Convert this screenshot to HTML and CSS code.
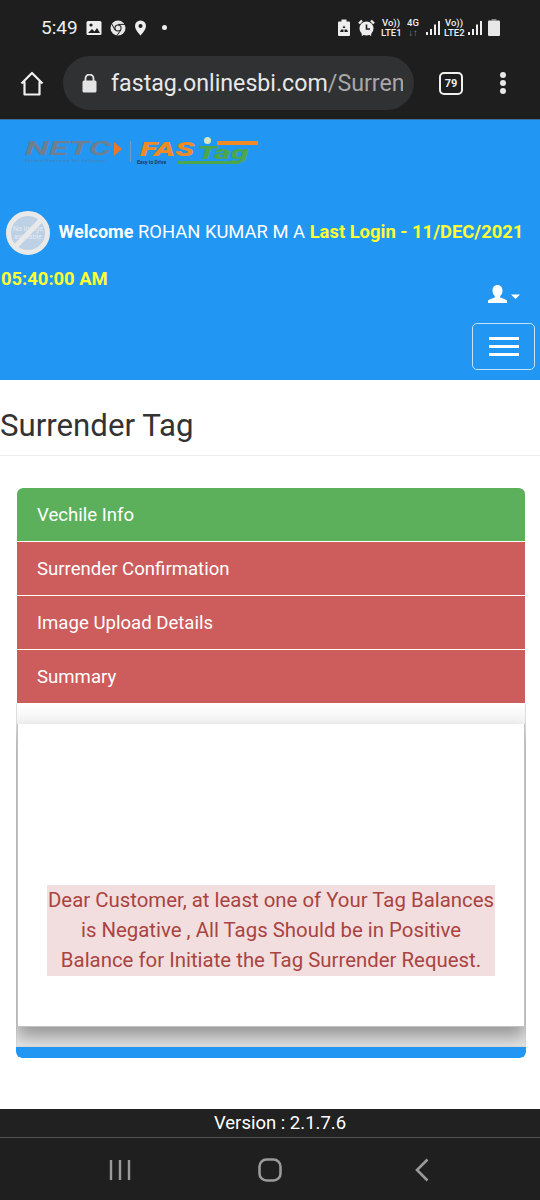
FILE: index.html
```html
<!DOCTYPE html>
<html lang="en">

<head>
    <meta charset="UTF-8">
    <meta name="viewport" content="width=device-width, initial-scale=1.0">
    <title>Surrender Tag</title>
    <link rel="stylesheet" href="styles.css">
</head>

<body>
    <!-- Phone status bar -->
    <div class="status-bar">
        <div class="status-left">
            <span class="clock">5:49</span>
            <svg width="16" height="16" viewBox="0 0 16 16"><rect x="0.5" y="1" width="15" height="14" rx="1.5" fill="#eee"/><circle cx="5" cy="5" r="1.6" fill="#1e1e1e"/><path d="M2 13l4-4 2.5 2.5L11 8l3 5z" fill="#1e1e1e"/></svg>
            <svg width="16" height="16" viewBox="0 0 16 16"><circle cx="8" cy="8" r="7.5" fill="#e6e6e6"/><circle cx="8" cy="8" r="3.6" fill="#1e1e1e"/><circle cx="8" cy="8" r="2.5" fill="#e6e6e6"/><path d="M8 4.4h7M5 10L1.8 4M10.8 10.2L7 15.4" stroke="#1e1e1e" stroke-width="1"/></svg>
            <svg width="13" height="16" viewBox="0 0 12 16"><path d="M6 0.5a5.5 5.5 0 0 0-5.500 5.500C0.500 10 6 15.500 6 15.500S11.500 10 11.500 6A5.500 5.500 0 0 0 6 0.500z" fill="#eee"/><circle cx="6" cy="6" r="2" fill="#1e1e1e"/></svg>
            <span class="status-dot"></span>
        </div>
        <div class="status-right">
            <svg class="saver" width="12" height="17" viewBox="0 0 12 17"><path d="M3.500 0.500h5v2H11a1 1 0 0 1 1 1V16a1 1 0 0 1-1 1H1a1 1 0 0 1-1-1V3.500a1 1 0 0 1 1-1h2.500z" fill="#eee"/><path d="M6 6.500l1.500 2.500h-3zM3 10.500h2.500v2.500H2zM6.500 10.500H9l1 2.500H6.500z" fill="#1e1e1e"/></svg>
            <svg class="alarm" width="17" height="17" viewBox="0 0 17 17"><circle cx="8.500" cy="9.500" r="7" fill="#eee"/><path d="M8.500 5.500v4.500h3.500" fill="none" stroke="#1e1e1e" stroke-width="1.600"/><path d="M1 4.500L4 1.500M16 4.500L13 1.500" stroke="#eee" stroke-width="2.400"/><path d="M4 16.500l1.500-2M13 16.500l-1.500-2" stroke="#eee" stroke-width="1.500"/></svg>
            <span class="net-label net-lte1">Vo))<br>LTE1</span>
            <span class="net-label net-4g">4G<br><span class="net-arrows">↓↑</span></span>
            <svg class="signal-1" width="14" height="15" viewBox="0 0 14 15"><path d="M0 12h2v3H0zM4 9h2v6H4zM8 4.500h2V15H8zM12 1h2v14h-2z" fill="#eee"/></svg>
            <span class="net-label net-lte2">Vo))<br>LTE2</span>
            <svg width="14" height="15" viewBox="0 0 14 15"><path d="M0 12h2v3H0zM4 9h2v6H4zM8 4.500h2V15H8zM12 1h2v14h-2z" fill="#eee"/></svg>
            <svg class="battery" width="12" height="17" viewBox="0 0 12 17"><path d="M3.500 0h5v1.500h-5z" fill="#888"/><rect x="0" y="1.500" width="12" height="15.500" rx="1" fill="#e8e8e8"/></svg>
        </div>
    </div>

    <!-- Browser toolbar -->
    <div class="browser-bar">
        <svg class="home-icon" width="24" height="25" viewBox="0 0 24 25"><path d="M1.500 12.500L12 2l10.500 10.500M4.500 10.500V23.500h15V10.500" fill="none" stroke="#f0f0f0" stroke-width="2.200" stroke-linejoin="round"/></svg>
        <div class="url-box">
            <svg width="15" height="19" viewBox="0 0 15 19"><rect x="0.500" y="6.500" width="14" height="12" rx="1.500" fill="#e4e4e4"/><path d="M3.500 7V4.500a4 4 0 0 1 8 0V7" fill="none" stroke="#e4e4e4" stroke-width="1.800"/></svg>
            <span class="url-text">fastag.onlinesbi.com<span class="url-path">/Surrend</span></span>
        </div>
        <div class="tab-count">79</div>
        <div class="menu-dots"><span></span><span></span><span></span></div>
    </div>

    <!-- Site header -->
    <header class="site-header">
        <div class="logos">
            <div class="logo-netc">
                <div class="netc-word"><span>NETC</span><i class="netc-arrow"></i></div>
                <div class="netc-sub">National Electronic Toll Collection</div>
            </div>
            <span class="logo-line"></span>
            <div class="logo-fastag">
                <span class="fas-word">FAS</span>
                <span class="tag-word">Tag</span>
                <i class="fastag-stripe"></i>
                <i class="fastag-flag"></i>
                <i class="fastag-road"></i>
                <span class="fastag-sub">Easy to Drive</span>
            </div>
        </div>
        <div class="welcome">
            <svg class="avatar" width="44" height="44" viewBox="0 0 44 44"><circle cx="22" cy="22" r="19.500" fill="#bdd0e4" stroke="#e9e9e9" stroke-width="5"/><text x="22" y="20" class="avatar-text">No image</text><text x="22" y="28" class="avatar-text">available</text><path d="M9 36L36 8" stroke="#e9e9e9" stroke-width="5"/></svg>
            <b class="welcome-label">Welcome</b> <span class="welcome-name">ROHAN KUMAR M A</span> <b class="last-login">Last Login - 11/DEC/2021</b> <b class="last-login">05:40:00 AM</b>
        </div>
        <div class="user-row">
            <svg width="32" height="18" viewBox="0 0 32 18"><path d="M9.500 0c3.300 0 5 2.400 5 5.700 0 2.300-1 4.300-2.300 5.300v1.400c2.700 1 5.900 1.900 6.800 3.200V18H0v-2.400c.9-1.300 4.100-2.200 6.800-3.200V11C5.500 10 4.500 8 4.500 5.700 4.500 2.400 6.200 0 9.500 0z" fill="#fff"/><path d="M23 9.500h9l-4.500 4.500z" fill="#fff"/></svg>
        </div>
        <div class="toggle-row">
            <div class="navbar-toggle"><span></span><span></span><span></span></div>
        </div>
    </header>

    <h1 class="page-title">Surrender Tag</h1>

    <div class="main-panel">
        <div class="step step-done">Vechile Info</div>
        <div class="step step-todo">Surrender Confirmation</div>
        <div class="step step-todo">Image Upload Details</div>
        <div class="step step-todo">Summary</div>

        <div class="step-body">
            <div class="message-card">
                <p class="message">Dear Customer, at least one of Your Tag Balances is Negative , All Tags Should be in Positive Balance for Initiate the Tag Surrender Request.</p>
            </div>
        </div>
        <div class="panel-foot"></div>
    </div>

    <div class="version-bar">Version : 2.1.7.6</div>

    <!-- Phone nav buttons -->
    <div class="nav-bar">
        <svg width="22" height="22" viewBox="0 0 22 22"><path d="M2 1v20M11 1v20M20 1v20" stroke="#9a9a9a" stroke-width="2.400"/></svg>
        <svg class="nav-home" width="24" height="24" viewBox="0 0 24 24"><rect x="1.500" y="1.500" width="21" height="21" rx="7" fill="none" stroke="#9a9a9a" stroke-width="2.600"/></svg>
        <svg width="14" height="24" viewBox="0 0 14 24"><path d="M12.500 1.500L2 12l10.500 10.500" fill="none" stroke="#9a9a9a" stroke-width="2.600"/></svg>
    </div>
</body>

</html>
```
FILE: styles.css
```css
/* Global Styles */
html,
body {
    margin: 0;
    padding: 0;
}

body {
    width: 540px;
    height: 1200px;
    overflow: hidden;
    background-color: #fff;
    font-family: Roboto, "Liberation Sans", sans-serif;
}

/* Status bar */
.status-bar {
    height: 55px;
    box-sizing: border-box;
    padding: 0 40px 0 41px;
    display: flex;
    justify-content: space-between;
    align-items: center;
    background-color: #1e1e1e;
    color: #eee;
}

.status-left {
    display: flex;
    align-items: center;
    gap: 8px;
}

.clock {
    font-size: 19px;
}

.status-dot {
    width: 5px;
    height: 5px;
    margin-left: 7px;
    border-radius: 50%;
    background-color: #eee;
}

.status-right {
    display: flex;
    align-items: center;
    gap: 4px;
}

.alarm {
    margin-left: 4px;
    margin-right: 2px;
}

.net-label {
    width: 20px;
    font-size: 9.5px;
    line-height: 10px;
    text-align: center;
    font-weight: 500;
}

.net-lte1 {
    margin-right: 2px;
}

.net-4g {
    width: 12px;
    margin-right: 3px;
}

.net-arrows {
    color: #888;
}

.battery {
    margin-left: 2px;
}

/* Browser toolbar */
.browser-bar {
    height: 64px;
    box-sizing: border-box;
    padding: 0 0 8px 20px;
    display: flex;
    align-items: center;
    background-color: #1e1e1e;
}

.url-box {
    width: 351px;
    height: 54px;
    box-sizing: border-box;
    margin-left: 19px;
    padding-left: 19px;
    display: flex;
    align-items: center;
    gap: 14px;
    border-radius: 27px;
    background-color: #303133;
    overflow: hidden;
}

.url-text {
    width: 292px;
    flex: none;
    overflow: hidden;
    white-space: nowrap;
    font-size: 23.2px;
    color: #e8e8e8;
}

.url-path {
    color: #a8a8a8;
}

.tab-count {
    width: 20px;
    height: 19px;
    margin-left: 25px;
    border: 2px solid #f0f0f0;
    border-radius: 5px;
    font-size: 11px;
    font-weight: 700;
    line-height: 19px;
    text-align: center;
    color: #f0f0f0;
}

.menu-dots {
    margin-left: 37px;
    display: flex;
    flex-direction: column;
    gap: 2px;
}

.menu-dots span {
    width: 6px;
    height: 6px;
    border-radius: 50%;
    background-color: #e6e6e6;
}

/* Site header */
.site-header {
    height: 261px;
    box-sizing: border-box;
    padding-top: 1px;
    background-color: #2196f3;
    border-top: 1px solid #3b6f9b;
}

.logos {
    height: 87px;
    box-sizing: border-box;
    padding: 20px 0 0 25px;
    display: flex;
    align-items: flex-start;
}

.logo-netc {
    width: 97px;
}

.netc-word {
    height: 15px;
    display: flex;
    align-items: center;
}

.netc-word span {
    width: 88px;
    font-size: 20px;
    font-style: italic;
    font-weight: 700;
    line-height: 15px;
    color: #6e7f91;
    transform: scaleX(1.75);
    transform-origin: left center;
}

.netc-arrow {
    width: 0;
    height: 0;
    margin-left: 1px;
    border-left: 8px solid #e8782c;
    border-top: 7px solid transparent;
    border-bottom: 7px solid transparent;
}

.netc-sub {
    margin-top: 2px;
    font-size: 4px;
    line-height: 5px;
    white-space: nowrap;
    letter-spacing: 0.6px;
    color: #5b7a96;
}

.logo-line {
    width: 1px;
    height: 21px;
    margin: 0 9px 0 8px;
    background-color: #6f9fc7;
}

.logo-fastag {
    position: relative;
    width: 121px;
    height: 26px;
    display: flex;
    font-style: italic;
    font-weight: 900;
}

.fas-word {
    width: 57px;
    font-size: 20px;
    line-height: 16px;
    color: #f08a24;
    transform: scaleX(1.6);
    transform-origin: left center;
}

.tag-word {
    margin-top: 5px;
    font-size: 19px;
    line-height: 14px;
    color: #4ca64c;
    transform: scaleX(1.7);
    transform-origin: left center;
}

.fastag-stripe {
    position: absolute;
    left: 77px;
    top: 0;
    width: 41px;
    height: 4px;
    background-color: #f08a24;
}

.fastag-flag {
    position: absolute;
    left: 64px;
    top: -4px;
    width: 7px;
    height: 7px;
    border-radius: 50%;
    background-color: #d9e4c8;
}

.fastag-road {
    position: absolute;
    left: 37px;
    top: 20px;
    width: 63px;
    height: 3px;
    border-radius: 2px;
    background-color: #4ca64c;
}

.fastag-sub {
    position: absolute;
    left: -3px;
    top: 18px;
    font-size: 5px;
    line-height: 6px;
    font-style: normal;
    font-weight: 700;
    white-space: nowrap;
    color: #1f3a5c;
}

.welcome {
    padding-left: 1px;
    font-size: 18.4px;
    line-height: 47px;
    color: #fff;
}

.avatar {
    vertical-align: middle;
    margin: 0 4px 0 5px;
}

.avatar-text {
    font-size: 7px;
    text-anchor: middle;
    fill: #e2eaf2;
}

.welcome-label {
    font-size: 18px;
    font-weight: 700;
}

.last-login {
    color: #ffff33;
}

.user-row {
    display: flex;
    justify-content: flex-end;
    padding-right: 20px;
    margin-top: -17px;
}

.toggle-row {
    display: flex;
    justify-content: flex-end;
    padding: 20px 5px 0 0;
}

.navbar-toggle {
    width: 61px;
    height: 45px;
    border: 1px solid #c5e2f8;
    border-radius: 5px;
    display: flex;
    flex-direction: column;
    justify-content: center;
    align-items: center;
    gap: 5px;
}

.navbar-toggle span {
    width: 30px;
    height: 3px;
    background-color: #fff;
}

/* Page title */
.page-title {
    height: 76px;
    box-sizing: border-box;
    margin: 0;
    padding-top: 27px;
    border-bottom: 1px solid #eee;
    font-size: 31.2px;
    font-weight: 400;
    line-height: 38px;
    color: #333;
}

/* Steps panel */
.main-panel {
    width: 510px;
    margin: 32px 0 51px 16px;
    border-radius: 6px;
    overflow: hidden;
}

.step {
    height: 53px;
    box-sizing: border-box;
    margin: 0 1px 1px;
    padding-left: 20px;
    font-size: 18.6px;
    line-height: 54px;
    color: #fff;
}

.step-done {
    background-color: #5cb05c;
    border-radius: 6px 6px 0 0;
}

.step-todo {
    background-color: #cd5c5c;
}

.step-body {
    padding-top: 20px;
    height: 343px;
    box-sizing: border-box;
    background: linear-gradient(#fff, #f2f2f2 20px, #e6e6e6);
    border: 1px solid #ddd;
    border-top: 0;
}

.message-card {
    height: 303px;
    box-sizing: border-box;
    border: 1px solid #c2c2c2;
    border-top: 0;
    background-color: #fff;
    box-shadow: 0 10px 16px rgba(0, 0, 0, 0.35);
    padding-top: 161px;
}

.message {
    width: 448px;
    margin: 0 auto;
    padding-bottom: 1px;
    background-color: #f2dede;
    font-size: 20.4px;
    line-height: 30px;
    text-align: center;
    color: #a94442;
}

.panel-foot {
    height: 11px;
    background-color: #2196f3;
    border-radius: 0 0 6px 6px;
}

/* Bottom bars */
.version-bar {
    height: 29px;
    box-sizing: border-box;
    padding-left: 20px;
    background-color: #212121;
    border-bottom: 1px solid #555;
    font-size: 18.5px;
    line-height: 29px;
    text-align: center;
    color: #fff;
}

.nav-bar {
    height: 62px;
    box-sizing: border-box;
    padding: 2px 111px 0 109px;
    display: flex;
    justify-content: space-between;
    align-items: center;
    background-color: #1f1f1f;
}

.nav-home {
    margin-right: 6px;
}
```
